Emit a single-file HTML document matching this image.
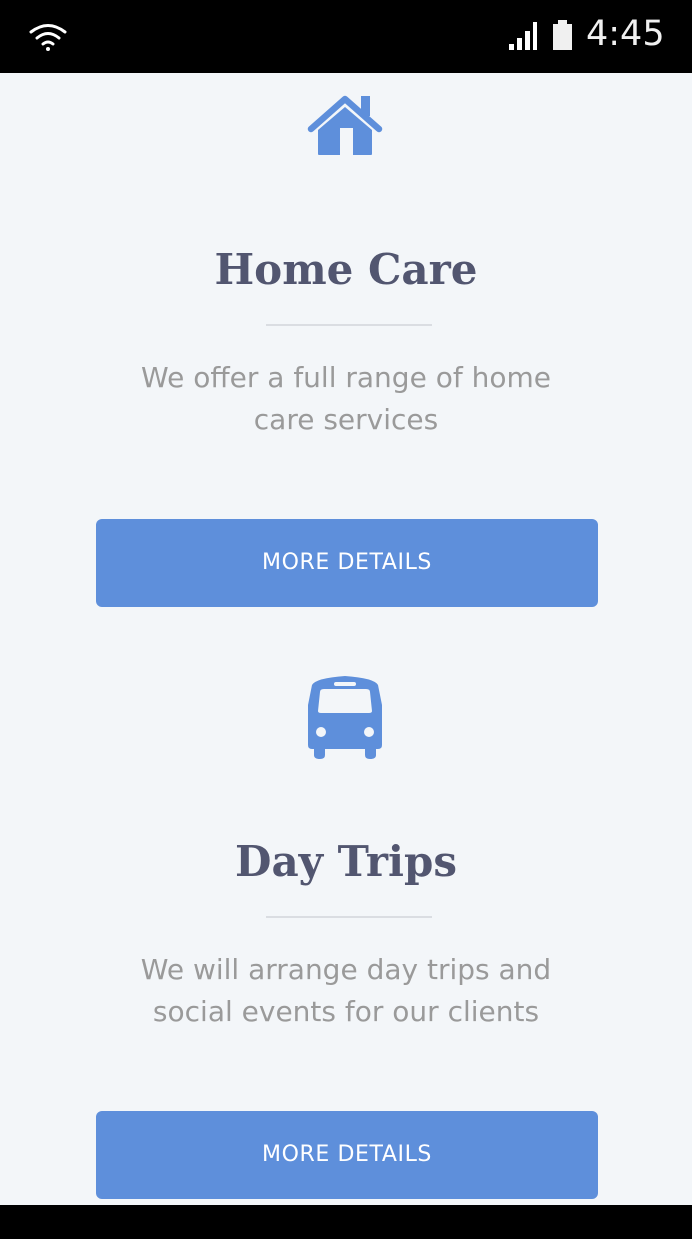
<!DOCTYPE html>
<html><head><meta charset="utf-8"><style>
*{margin:0;padding:0;box-sizing:border-box}
body{width:692px;height:1239px;background:#f3f6f9;position:relative;overflow:hidden;font-family:"Liberation Sans",sans-serif}
.bar{position:absolute;left:0;top:0;width:692px;height:73px;background:#000}
.bot{position:absolute;left:0;top:1205px;width:692px;height:34px;background:#000}
.t{position:absolute;left:0;width:692px;text-align:center;font-family:"DejaVu Serif","Liberation Serif",serif;font-weight:bold;font-size:42px;color:#525670}
.hr{position:absolute;left:266px;width:166px;height:2px;background:#dadde2}
.p{position:absolute;left:0;width:692px;text-align:center;font-family:"DejaVu Sans",sans-serif;font-size:28px;line-height:42px;color:#9a9a9a}
.b{position:absolute;left:96px;width:502px;height:88px;background:#5e8fdb;border-radius:6px;color:#fff;font-family:"DejaVu Sans",sans-serif;font-size:22px;letter-spacing:0.6px;text-align:center;line-height:88px}
</style></head><body>
<div class="bar">
<svg style="position:absolute;left:28px;top:22px" width="40" height="30" viewBox="0 0 40 30"><g fill="none" stroke="#fff" stroke-width="3" stroke-linecap="round"><path d="M3 10 Q20 -3 37 10"/><path d="M9 16 Q20 7 31 16"/><path d="M15 22 Q20 18 25 22"/></g><circle cx="20" cy="27" r="2" fill="#fff"/></svg>
<svg style="position:absolute;left:508px;top:20px" width="30" height="30" viewBox="0 0 30 30"><path d="M1 24h5v6h-5zM9 18h5v12h-5zM17 11h5v19h-5zM25 2h4v28h-4z" fill="#fff"/></svg>
<div style="position:absolute;left:553px;top:24px;width:19px;height:26px;background:#f0f0f0"></div>
<div style="position:absolute;left:558px;top:20px;width:9px;height:5px;background:#f0f0f0"></div>
<div style="position:absolute;left:586px;top:14px;color:#f0f0f0;font-family:'DejaVu Sans',sans-serif;font-size:35px">4:45</div>
</div>
<svg style="position:absolute;left:306px;top:94px" width="78" height="62" viewBox="0 0 78 62"><path d="M55 2h9v20h-9z" fill="#5e8fdb"/><path d="M5 35 L39 5 L73 35" fill="none" stroke="#5e8fdb" stroke-width="6.5" stroke-linecap="round" stroke-linejoin="round"/><path d="M12 36 L39 13 L66 36 V60 a1 1 0 0 1-1 1 H47 V34 H34 V61 H13 a1 1 0 0 1-1-1Z" fill="#5e8fdb"/></svg>
<div class="t" style="top:245px">Home Care</div>
<div class="hr" style="top:324px"></div>
<div class="p" style="top:357px">We offer a full range of home<br>care services</div>
<div class="b" style="top:519px">MORE DETAILS</div>
<svg style="position:absolute;left:308px;top:675px" width="74" height="84" viewBox="0 0 74 84"><path d="M4 10 Q8 3 37 1 Q66 3 70 10 L74 30 V70 Q74 74 70 74 H68 V80 Q68 84 62 84 Q57 84 57 80 V74 H17 V80 Q17 84 12 84 Q6 84 6 80 V74 H4 Q0 74 0 70 V30 Z" fill="#5e8fdb"/><path d="M12 17 Q12 14 16 14 H58 Q62 14 62 17 L64 36 Q64 38 61 38 H13 Q10 38 10 36Z" fill="#f3f6f9"/><rect x="26" y="7" width="22" height="4" rx="2" fill="#f3f6f9"/><circle cx="13" cy="57" r="5" fill="#f3f6f9"/><circle cx="61" cy="57" r="5" fill="#f3f6f9"/></svg>
<div class="t" style="top:837px">Day Trips</div>
<div class="hr" style="top:916px"></div>
<div class="p" style="top:949px">We will arrange day trips and<br>social events for our clients</div>
<div class="b" style="top:1111px">MORE DETAILS</div>
<div class="bot"></div>
</body></html>
